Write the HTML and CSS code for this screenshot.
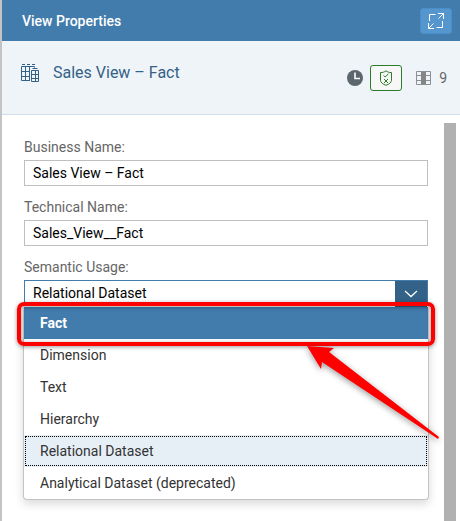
FILE: index.html
```html
<!DOCTYPE html>
<html lang="en">
<head>
<meta charset="utf-8">
<title>View Properties</title>
<link rel="stylesheet" href="styles.css">
</head>
<body>
<main class="panel">
  <header class="titlebar">
    <h1 class="titlebar-text">View Properties</h1>
    <button class="expand" type="button" aria-label="Expand">
      <svg width="18" height="18" viewBox="0 0 18 18" fill="none" stroke="#fff">
        <path d="M8.500 2.500h-6V9M9.500 15.500h6V9M11 1.500h5.500V7M16.500 1.500l-5 5M1.500 11v5.500H7M1.500 16.500l5-5"/>
      </svg>
    </button>
  </header>
  <section class="summary">
    <svg class="view-icon" width="18" height="18" viewBox="0 0 18 18" fill="none" stroke="#346187">
      <path d="M1 .5h3M6 .5h3M11 .5h3"/>
      <path d="M9 16.500H.500v-14h13v1M.500 7.500H9M.500 12.500H9M4.500 2.500v14M8.500 2.500v14"/>
      <path d="M10.500 6.500h7v11h-7zM10.500 10.500h7M10.500 14.500h7M14.500 6.500v11M11.500 4.500h5"/>
    </svg>
    <h2 class="summary-name">Sales View – Fact</h2>
    <div class="status">
      <svg class="clock" width="16" height="16" viewBox="0 0 16 16">
        <circle cx="8" cy="8" r="8" fill="#5b666d"/>
        <path d="M8 2.500v6h5" fill="none" stroke="#fff" stroke-width="1.600"/>
      </svg>
      <button class="validate" type="button" aria-label="Validation status">
        <svg width="14" height="16" viewBox="0 0 14 16" fill="none" stroke="#2b7c2b">
          <path d="M7 .8C5.500 2 3.700 2.700 1.500 2.500v7.800c0 2.200 2.500 4 5.500 5 3-1 5.500-2.800 5.500-5V2.500C10.300 2.700 8.500 2 7 .8z"/>
          <path d="M4.500 5.500l1.700 1.500 3.300-3.300M5 9l4 4M9 9l-4 4"/>
        </svg>
      </button>
      <svg class="columns-icon" width="15" height="14" viewBox="0 0 15 14" fill="none" stroke="#8b9096">
        <path d="M5 0h5v14H5z" fill="#858585" stroke="none"/>
        <path d="M.5.5h14v13H.5zM.5 4.500H5M.5 9.500H5M10 4.500h4.500M10 9.500h4.500"/>
      </svg>
      <span class="column-count">9</span>
    </div>
  </section>
  <div class="content">
    <form class="fields">
      <div class="field">
        <label for="business">Business Name:</label>
        <input class="control" id="business" type="text" value="Sales View – Fact">
      </div>
      <div class="field">
        <label for="technical">Technical Name:</label>
        <input class="control" id="technical" type="text" value="Sales_View__Fact">
      </div>
      <div class="field">
        <label for="usage">Semantic Usage:</label>
        <div class="combo">
          <select class="control combo-select" id="usage">
            <option>Fact</option>
            <option>Dimension</option>
            <option>Text</option>
            <option>Hierarchy</option>
            <option selected>Relational Dataset</option>
            <option>Analytical Dataset (deprecated)</option>
          </select>
          <span class="combo-arrow">
            <svg width="14" height="8" viewBox="0 0 14 8" fill="none" stroke="#fff" stroke-width="1.300"><path d="M1 1l6 5.500L13 1"/></svg>
          </span>
          <ul class="menu" role="listbox" aria-label="Semantic Usage">
            <li class="item active" role="option">Fact</li>
            <li class="item" role="option">Dimension</li>
            <li class="item" role="option">Text</li>
            <li class="item" role="option">Hierarchy</li>
            <li class="item selected" role="option" aria-selected="true">Relational Dataset</li>
            <li class="item" role="option">Analytical Dataset (deprecated)</li>
          </ul>
          <div class="highlight"></div>
          <svg class="pointer" width="134" height="94" viewBox="0 0 134 94">
            <path d="M1 1l27 2-5 4 110 85-1 2L16 17l-1 7z" fill="#fe0000"/>
          </svg>
        </div>
      </div>
    </form>
    <div class="scrollbar"></div>
  </div>
</main>
</body>
</html>
```
FILE: styles.css
```css
* {
  box-sizing: border-box;
}

body {
  margin: 0;
  background: #fff;
  color: #333;
  font: 14px/18px Roboto, "Liberation Sans", sans-serif;
}

h1,
h2 {
  margin: 0;
}

svg {
  display: block;
}

.panel {
  display: flex;
  flex-direction: column;
  min-height: 100vh;
  border-left: 2px solid #c4c4c4;
}

.titlebar {
  display: flex;
  align-items: center;
  justify-content: space-between;
  height: 41px;
  padding: 0 8px 0 20px;
  background: #427cac;
  color: #fff;
}

.titlebar-text {
  font-size: 14px;
  font-weight: 500;
}

.expand {
  display: grid;
  place-items: center;
  width: 32px;
  height: 26px;
  padding: 0;
  border: 1px solid #4a8fca;
  border-radius: 3px;
  background: #5496cd;
}

.summary {
  display: flex;
  align-items: flex-start;
  height: 74px;
  padding: 23px 13px 0 19px;
  border-bottom: 1px solid #d1e0ee;
  background: #eff4f9;
}

.summary-name {
  flex: 1;
  margin-left: 14px;
  color: #346187;
  font-size: 16px;
  font-weight: 400;
  line-height: 18px;
}

.status {
  display: flex;
  align-items: center;
  height: 28px;
}

.validate {
  display: grid;
  place-items: center;
  width: 32px;
  height: 26px;
  margin: 0 14px 0 7px;
  padding: 0;
  border: 1px solid #2b7c2b;
  border-radius: 3px;
  background: #f7f7f7;
}

.column-count {
  margin-left: 8px;
  color: #666;
}

.content {
  display: flex;
  flex: 1;
  padding: 8px 4px 0 22px;
}

.fields {
  flex: 1;
  padding: 15px 16px 0 0;
}

.field {
  display: flex;
  flex-direction: column;
  gap: 4px;
  margin-bottom: 12px;
}

label {
  color: #666;
}

.control {
  display: block;
  width: 100%;
  height: 26px;
  padding: 0 8px;
  border: 1px solid #bfbfbf;
  border-radius: 0;
  background: #fff;
  color: #000;
  font: inherit;
  outline: 0;
}

.combo {
  position: relative;
}

.combo-select {
  border-color: #427cac;
  appearance: none;
}

.combo-arrow {
  position: absolute;
  top: 1px;
  right: 1px;
  display: grid;
  place-items: center;
  width: 32px;
  height: 26px;
  background: #346187;
  pointer-events: none;
}

.menu {
  position: absolute;
  top: 27px;
  right: -1px;
  left: -1px;
  margin: 0;
  padding: 0;
  border: 1px solid #c3c3c3;
  border-top: 0;
  border-radius: 4px;
  background: #fff;
  box-shadow: 0 4px 10px rgba(0, 0, 0, 0.15);
  list-style: none;
}

.item {
  height: 32px;
  padding: 0 16px;
  line-height: 32px;
}

.active {
  background: #427cac;
  color: #fff;
  font-weight: 700;
}

.selected {
  background: #e6eef6;
  outline: 1px dotted #000;
  outline-offset: -2px;
}

.highlight {
  position: absolute;
  top: 22px;
  right: -7px;
  left: -7px;
  height: 44px;
  border: 4px solid #fe0000;
  border-radius: 7px;
  box-shadow: 0 1px 4px rgba(0, 0, 0, 0.4), inset 0 1px 4px rgba(0, 0, 0, 0.4);
}

.pointer {
  position: absolute;
  top: 65px;
  right: -12px;
  overflow: visible;
  filter: drop-shadow(0 2px 3px rgba(0, 0, 0, 0.4));
}

.scrollbar {
  width: 12px;
  background: #b1b1b1;
}
```
